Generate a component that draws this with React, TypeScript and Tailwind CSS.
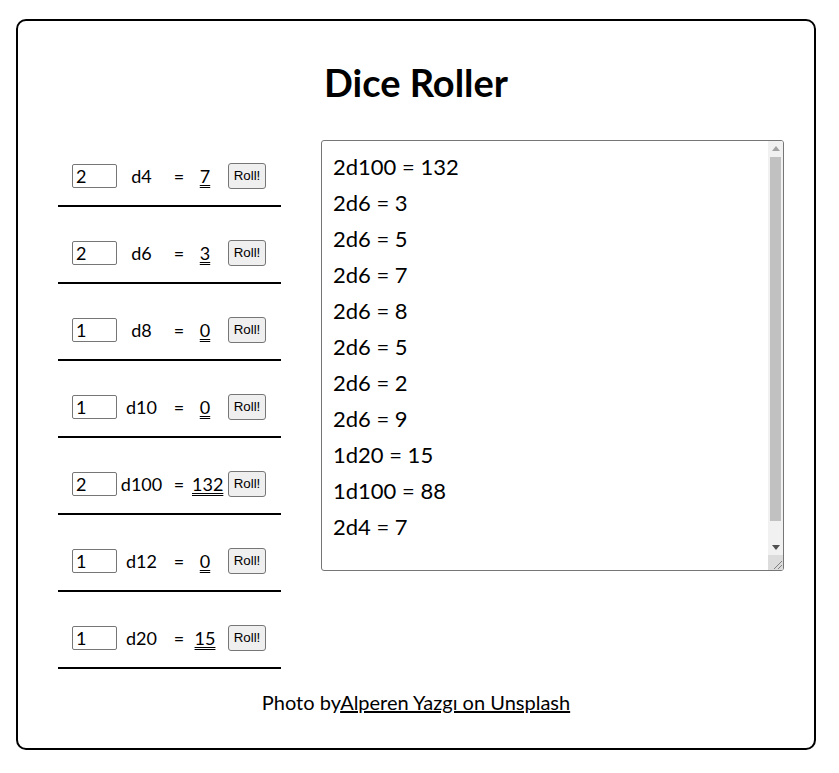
import React from "react";

const dice = [
  { n: "2", d: "d4", v: "7" },
  { n: "2", d: "d6", v: "3" },
  { n: "1", d: "d8", v: "0" },
  { n: "1", d: "d10", v: "0" },
  { n: "2", d: "d100", v: "132" },
  { n: "1", d: "d12", v: "0" },
  { n: "1", d: "d20", v: "15" },
];

const log = [
  "2d100 = 132",
  "2d6 = 3",
  "2d6 = 5",
  "2d6 = 7",
  "2d6 = 8",
  "2d6 = 5",
  "2d6 = 2",
  "2d6 = 9",
  "1d20 = 15",
  "1d100 = 88",
  "2d4 = 7",
].join("\n");

function FakeScrollbar() {
  return (
    <div className="w-[15px] h-full bg-[#f1f1f1] flex flex-col shrink-0">
      <div className="h-[15px] flex items-center justify-center">
        <svg width="8" height="5" viewBox="0 0 8 5">
          <polygon points="0,5 8,5 4,0" fill="#a3a3a3" />
        </svg>
      </div>
      <div className="flex-1 flex flex-col pt-[1px]">
        <div className="mx-[2px] h-[364px] bg-[#c1c1c1]" />
      </div>
      <div className="h-[15px] flex items-center justify-center">
        <svg width="8" height="5" viewBox="0 0 8 5">
          <polygon points="0,0 8,0 4,5" fill="#505050" />
        </svg>
      </div>
      <div className="h-[15px] bg-[#dcdcdc] flex items-end justify-end">
        <svg width="12" height="12" viewBox="0 0 12 12">
          <line x1="3" y1="11" x2="11" y2="3" stroke="#808080" strokeWidth="1" />
          <line x1="7" y1="11" x2="11" y2="7" stroke="#808080" strokeWidth="1" />
        </svg>
      </div>
    </div>
  );
}

export default function App() {
  return (
    <div className="font-['Lato',sans-serif] text-black bg-white min-h-[773px] pt-[19px]">
      <div className="ml-[16px] w-[800px] h-[731px] border-2 border-black rounded-[10px] flex flex-col">
        <h1 className="text-center text-[38px] font-bold leading-none mt-[42px] mb-0">Dice Roller</h1>
        <div className="flex items-start pl-[40px] mt-[29px]">
          <div className="w-[223px] flex flex-col">
            {dice.map((r) => (
              <div key={r.d} className="h-[77px] border-b-2 border-black flex items-center pl-[14px] pt-[17px]">
                <input
                  defaultValue={r.n}
                  className="w-[45px] h-[24px] border border-[#767676] rounded-[2px] px-[3px] text-[18px] leading-none font-['Lato',sans-serif]"
                />
                <span className="w-[49px] text-center text-[18px]">{r.d}</span>
                <span className="w-[26px] text-center text-[18px]">=</span>
                <span className="w-[26px] text-center text-[18px] underline decoration-double decoration-1 underline-offset-2">{r.v}</span>
                <span className="w-[58px] flex justify-center">
                  <button className="h-[26px] px-[5px] bg-[#efefef] border border-[#767676] rounded-[3px] text-[13.33px] font-['Liberation_Sans',Arial,sans-serif] leading-none">
                    Roll!
                  </button>
                </span>
              </div>
            ))}
          </div>
          <div className="ml-[40px] mt-[10px] w-[463px] h-[431px] border border-[#767676] rounded-[3px] flex overflow-hidden">
            <textarea
              readOnly
              defaultValue={log}
              className="flex-1 h-full pt-[8px] pl-[11px] pr-[4px] text-[22px] leading-[36px] font-['Lato',sans-serif] resize-none overflow-hidden outline-none border-0"
            />
            <FakeScrollbar />
          </div>
        </div>
        <p className="text-center text-[20px] mt-[18px]">
          Photo by<a className="underline" href="#">Alperen Yazgı on Unsplash</a>
        </p>
      </div>
    </div>
  );
}
